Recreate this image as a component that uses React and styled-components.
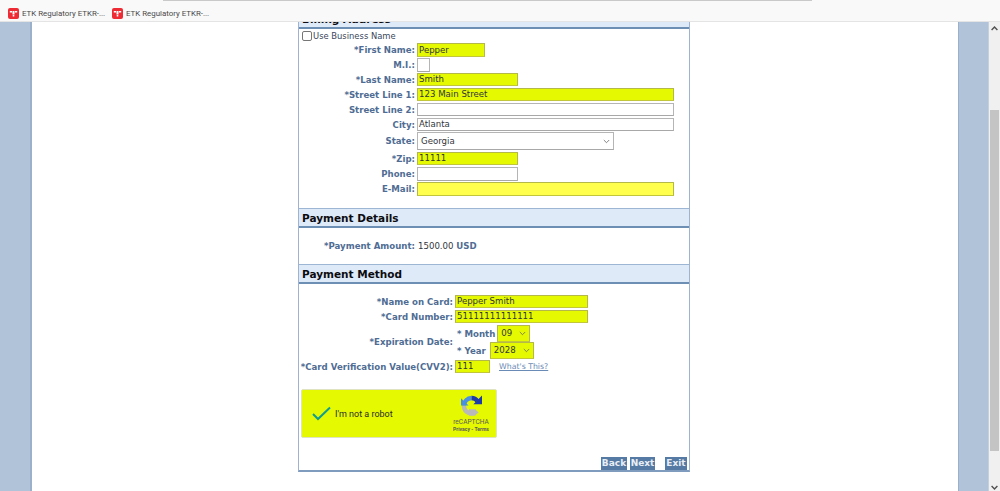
import React from 'react';
import styled, { createGlobalStyle } from 'styled-components';

const Global = createGlobalStyle`
  html, body { margin: 0; padding: 0; height: 491px; overflow: hidden; background: #fff; }
  #root { height: 491px; }
`;

const Screen = styled.div`
  width: 1000px; height: 491px; display: flex; flex-direction: column; overflow: hidden;
  font-family: "DejaVu Sans", Verdana, sans-serif;
`;
const Bookmarks = styled.div`
  height: 22px; flex: none; box-sizing: border-box; background: #f9f9f9; border-bottom: 1px solid #e4e4e4;
  display: flex; align-items: center; gap: 8px; padding: 5px 0 0 8px; position: relative;
`;
const TopLine = styled.div`
  position: absolute; left: 163px; top: 0; width: 649px; height: 1px; background: #c9c9c9;
`;
const Bookmark = styled.div`
  display: flex; align-items: center; gap: 3px; width: 96px; flex: none;
  font: 7.9px Roboto, "Segoe UI", sans-serif; color: #4a4a4a; white-space: nowrap;
  & svg { flex: none; }
`;
const Viewport = styled.div`flex: 1; display: flex; min-height: 0;`;
const Gutter = styled.div`
  width: ${p => p.$side === 'left' ? 32 : 31}px; flex: none; box-sizing: border-box; background: #b0c3d8;
  ${p => p.$side === 'left' ? 'border-right: 2px solid #9ab0cb;' : 'border-left: 1px solid #9ab0cb; border-right: 1px solid #c2d0e2;'}
`;
const Page = styled.main`flex: 1; background: #fff; display: flex; justify-content: center; overflow: hidden;`;
const Card = styled.div`
  width: 392px; height: 463px; flex: none; margin: -13px 0 0 -2px; box-sizing: border-box;
  border: 1px solid #9db3cf; border-bottom: 2px solid #7f9bbd; border-top: 0; display: flex; flex-direction: column;
`;
const SectionHead = styled.h2`
  margin: 0; height: 20px; flex: none; box-sizing: border-box; background: #deeaf8;
  border-top: 1px solid #9db6d3; border-bottom: 2px solid #6e8fb4;
  padding-left: 3px; font: bold 10.5px/19px "DejaVu Sans", Verdana, sans-serif; color: #0c0c10;
`;
const Billing = styled.section`height: 179px; flex: none; display: flex; flex-direction: column;`;
const CheckRow = styled.label`
  display: flex; align-items: center; height: 12px; margin-top: 1px; padding-left: 3px; gap: 1px;
  font-size: 8.4px; color: #38465a;
`;
const Box = styled.span`
  width: 10px; height: 10px; box-sizing: border-box; flex: none; border: 1px solid #767676; border-radius: 2px; background: #fff; display: block;
`;
const Row = styled.div`
  display: flex; align-items: center; height: ${p => p.$h}px; flex: none; margin-top: ${p => p.$top || 0}px;
`;
const Label = styled.span`
  width: ${p => p.$w || 116}px; flex: none; text-align: right; white-space: nowrap; margin-right: 2px;
  font-size: 8.6px; font-weight: bold; color: #4f6d94;
`;
const Field = styled.div`
  width: ${p => p.$w}px; height: ${p => p.$h || 13}px; box-sizing: border-box; flex: none;
  background: ${p => p.$bg || '#fff'};
  border: 1px solid ${p => p.$bg ? '#b4b84a' : '#b5b5b5'}; border-bottom-color: ${p => p.$bg ? '#c2c63a' : '#a8a8a8'};
  padding-left: 1px; font-size: 8.6px; line-height: ${p => (p.$h || 13) - 2}px; color: #32363c; white-space: nowrap;
`;
const Select = styled(Field)`
  display: flex; align-items: center; justify-content: space-between; padding: 0 3px;
  & svg { flex: none; }
`;
const Details = styled.section`height: 36px; flex: none; display: flex; align-items: center;`;
const Amount = styled.span`
  font-size: 8.6px; color: #32363c; margin-left: 1px; & b { color: #4f6d94; font-weight: bold; }
`;
const Method = styled.section`flex: 1; display: flex; flex-direction: column; padding-top: 10px;`;
const ExpiryRow = styled.div`display: flex; align-items: center; height: 34px; flex: none; margin-top: 1px;`;
const ExpiryStack = styled.div`display: flex; flex-direction: column; margin-left: 2px;`;
const ExpiryLine = styled.div`display: flex; align-items: center; gap: ${p => p.$gap}px; height: 17px;`;
const SubLabel = styled.span`font-size: 8.6px; font-weight: bold; color: #4f6d94;`;
const Help = styled.a`
  margin-left: 9px; font-size: 7.8px; color: #6a8bb5; text-decoration: underline;
`;
const Captcha = styled.div`
  width: 196px; height: 49px; margin: 15px 0 0 2px; flex: none; box-sizing: border-box; background: #e5f900;
  border: 1px solid #dfe3c0; border-radius: 2px; display: flex; align-items: center; padding: 0 3px 0 10px;
`;
const RobotText = styled.span`
  flex: 1; margin-left: 4px; font: 9px Roboto, sans-serif; color: #2b2b2b;
`;
const Brand = styled.div`
  width: 44px; display: flex; flex-direction: column; align-items: center; color: #5a5a5a;
  font: 6.6px/8px Roboto, sans-serif;
  & small { font: bold 5.1px/6px Roboto, sans-serif; white-space: nowrap; }
  & svg { margin-bottom: 2px; }
`;
const Actions = styled.div`
  display: flex; justify-content: flex-end; gap: 3px; margin-top: 19px; padding-right: 2px;
`;
const Btn = styled.button`
  height: 13px; width: ${p => p.$w}px; margin-left: ${p => p.$gap || 0}px; padding: 0; border: 0; background: #557aa4; color: #e8eef6;
  font: bold 9px/13px "DejaVu Sans", Verdana, sans-serif;
`;
const Scrollbar = styled.div`
  width: 11px; flex: none; background: #f0f0f0; position: relative;
`;
const Thumb = styled.div`
  position: absolute; left: 1px; top: 88px; width: 9px; height: 341px; background: #c4c4c4;
`;
const Arrow = styled.svg`position: absolute; left: 2px; ${p => p.$pos};`;

const Favicon = () => (
  <svg width="11" height="11" viewBox="0 0 11 11">
    <rect width="11" height="11" rx="2" fill="#ee2a35" />
    <path d="M1.8 3h2.2v1.6H1.8zM4.5 3h2v3.4h-2zM7 3h2.2v1.6H7zM4.7 7h1.6v1.5H4.7z" fill="#fff" />
  </svg>
);
const Chevron = ({ color = '#666' }) => (
  <svg width="7" height="5" viewBox="0 0 7 5"><path d="M.8 1l2.7 2.7L6.2 1" fill="none" stroke={color} strokeWidth=".8" /></svg>
);

const F = ({ label, w, h, bg, children, rowH, top }) => (
  <Row $h={rowH || 15} $top={top}>
    <Label>{label}</Label>
    <Field $w={w} $h={h} $bg={bg}>{children}</Field>
  </Row>
);
const Y = '#e5f900';
const CardF = ({ label, w, children, top }) => (
  <Row $h={15} $top={top}>
    <Label $w={154}>{label}</Label>
    <Field $w={w} $bg={Y}>{children}</Field>
  </Row>
);

export default function App() {
  return (
    <Screen>
      <Global />
      <Bookmarks>
        <TopLine />
        <Bookmark><Favicon />ETK Regulatory ETKR-...</Bookmark>
        <Bookmark><Favicon />ETK Regulatory ETKR-...</Bookmark>
      </Bookmarks>
      <Viewport>
        <Gutter $side="left" />
        <Page>
          <Card>
            <SectionHead>Billing Address</SectionHead>
            <Billing>
              <CheckRow><Box />Use Business Name</CheckRow>
              <F label="*First Name:" w={68} bg={Y} h={14}>Pepper</F>
              <F label="M.I.:" w={13} h={14}></F>
              <F label="*Last Name:" w={101} bg={Y}>Smith</F>
              <F label="*Street Line 1:" w={257} bg={Y}>123 Main Street</F>
              <F label="Street Line 2:" w={257}></F>
              <F label="City:" w={257}>Atlanta</F>
              <Row $h={18}>
                <Label>State:</Label>
                <Select $w={197} $h={18}>Georgia<Chevron /></Select>
              </Row>
              <F label="*Zip:" w={101} bg={Y} top={1}>11111</F>
              <F label="Phone:" w={101} h={14}></F>
              <F label="E-Mail:" w={257} bg="#ffff4d" h={14}></F>
            </Billing>
            <SectionHead>Payment Details</SectionHead>
            <Details>
              <Label>*Payment Amount:</Label>
              <Amount>1500.00 <b>USD</b></Amount>
            </Details>
            <SectionHead>Payment Method</SectionHead>
            <Method>
              <CardF label="*Name on Card:" w={133}>Pepper Smith</CardF>
              <CardF label="*Card Number:" w={133}>51111111111111</CardF>
              <ExpiryRow>
                <Label $w={154}>*Expiration Date:</Label>
                <ExpiryStack>
                  <ExpiryLine $gap={2}>
                    <SubLabel>* Month</SubLabel>
                    <Select $w={33} $h={17} $bg={Y}>09<Chevron /></Select>
                  </ExpiryLine>
                  <ExpiryLine $gap={4}>
                    <SubLabel>* Year</SubLabel>
                    <Select $w={44} $h={17} $bg={Y}>2028<Chevron /></Select>
                  </ExpiryLine>
                </ExpiryStack>
              </ExpiryRow>
              <Row $h={15}>
                <Label $w={154}>*Card Verification Value(CVV2):</Label>
                <Field $w={35} $bg={Y}>111</Field>
                <Help>What's This?</Help>
              </Row>
              <Captcha>
                <svg width="19" height="15" viewBox="0 0 19 15"><path d="M1 8l5 5L18 1.5" fill="none" stroke="#0f9d92" strokeWidth="2" /></svg>
                <RobotText>I'm not a robot</RobotText>
                <Brand>
                  <svg width="21" height="21" viewBox="0 0 21 21">
                    <path d="M3 10.5A7.5 7.5 0 0 1 10.5 3" fill="none" stroke="#4a90e2" strokeWidth="4.4" />
                    <path d="M0 3.2l7.6 7.4H0z" fill="#4a90e2" />
                    <path d="M10.5 3a7.5 7.5 0 0 1 5.9 3" fill="none" stroke="#1c3aa9" strokeWidth="4.4" />
                    <path d="M21 .6v8.6h-8.6z" fill="#1c3aa9" />
                    <path d="M3 11a7.5 7.5 0 0 0 13 5" fill="none" stroke="#b9b9b9" strokeWidth="4.4" />
                    <path d="M8 14.2h6.6v6.4H8z" fill="#b9b9b9" />
                  </svg>
                  reCAPTCHA
                  <small>Privacy - Terms</small>
                </Brand>
              </Captcha>
              <Actions>
                <Btn $w={26}>Back</Btn>
                <Btn $w={25}>Next</Btn>
                <Btn $w={22} $gap={7}>Exit</Btn>
              </Actions>
            </Method>
          </Card>
        </Page>
        <Gutter $side="right" />
        <Scrollbar>
          <Arrow $pos="top: 4px" width="7" height="5" viewBox="0 0 7 5"><path d="M.6 4L3.5 1l2.9 3" fill="none" stroke="#505050" strokeWidth="1.4" /></Arrow>
          <Thumb />
          <Arrow $pos="bottom: 1px" width="7" height="5" viewBox="0 0 7 5"><path d="M.6 1l2.9 3 2.9-3" fill="none" stroke="#505050" strokeWidth="1.4" /></Arrow>
        </Scrollbar>
      </Viewport>
    </Screen>
  );
}
